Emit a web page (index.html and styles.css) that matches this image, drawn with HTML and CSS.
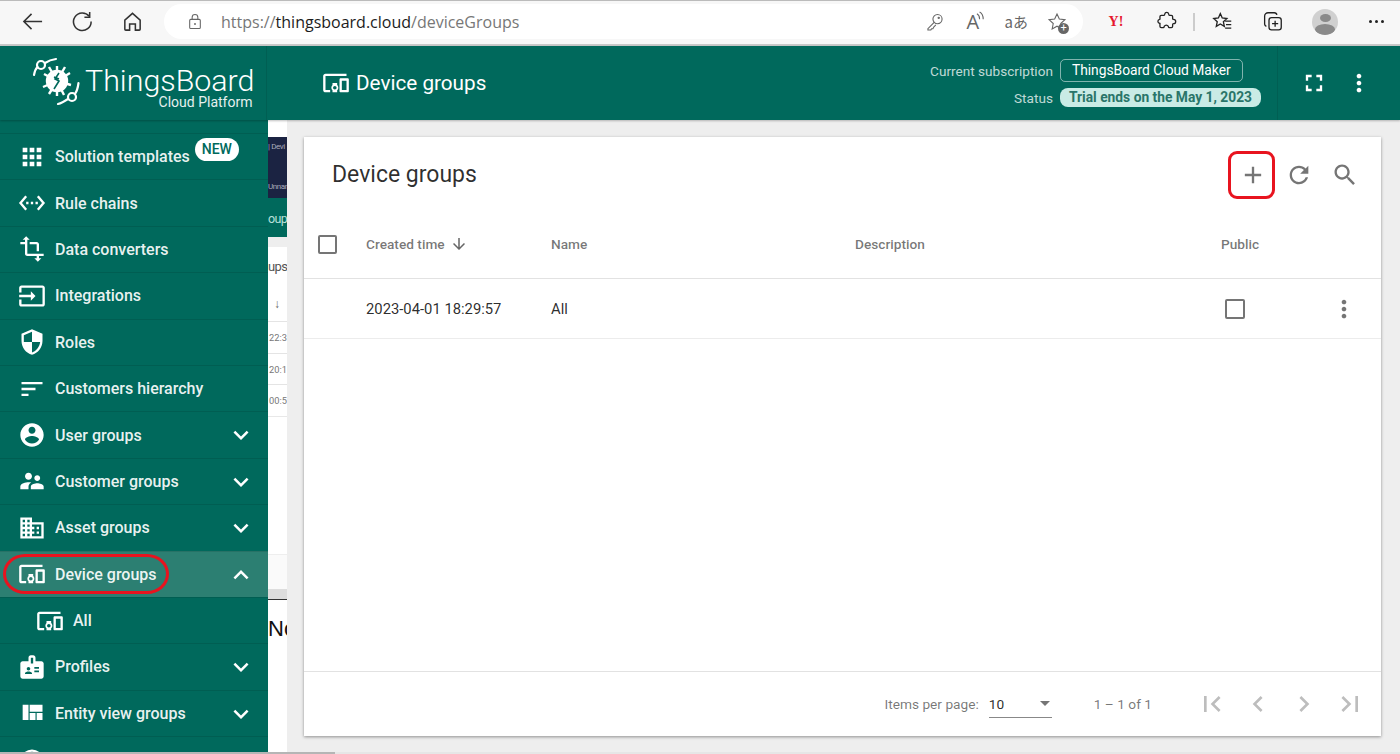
FILE: index.html
```html
<!DOCTYPE html>
<html lang="en">
<head>
    <meta charset="UTF-8">
    <meta name="viewport" content="width=device-width, initial-scale=1.0">
    <title>Device groups</title>
    <link rel="stylesheet" href="styles.css">
</head>
<body>
    <svg class="defs" width="0" height="0">
        <symbol id="i-devices" viewBox="0 0 24 24"><path d="M3 6h18V4H3c-1.1 0-2 .9-2 2v12c0 1.1.9 2 2 2h4v-2H3V6zm10 6H9v1.78c-.61.55-1 1.33-1 2.22s.39 1.67 1 2.22V20h4v-1.78c.61-.55 1-1.34 1-2.22s-.39-1.67-1-2.22V12zm-2 5.5c-.83 0-1.5-.67-1.5-1.5s.67-1.5 1.5-1.5 1.5.67 1.5 1.5-.67 1.5-1.5 1.5zM22 8h-6c-.5 0-1 .5-1 1v10c0 .5.5 1 1 1h6c.5 0 1-.5 1-1V9c0-.5-.5-1-1-1zm-1 10h-4v-8h4v8z"/></symbol>
        <symbol id="i-more" viewBox="0 0 24 24"><path d="M16.59 8.59L12 13.17 7.41 8.59 6 10l6 6 6-6z"/></symbol>
        <symbol id="i-less" viewBox="0 0 24 24"><path d="M12 8l-6 6 1.41 1.41L12 10.83l4.59 4.58L18 14z"/></symbol>
        <symbol id="i-vert" viewBox="0 0 24 24"><path d="M12 8c1.1 0 2-.9 2-2s-.9-2-2-2-2 .9-2 2 .9 2 2 2zm0 2c-1.1 0-2 .9-2 2s.9 2 2 2 2-.9 2-2-.9-2-2-2zm0 6c-1.1 0-2 .9-2 2s.9 2 2 2 2-.9 2-2-.9-2-2-2z"/></symbol>
    </svg>

    <div class="browser">
        <span class="slot"><svg class="b-icon" viewBox="0 0 24 24"><path d="M3 12h19M11 4l-8 8 8 8"/></svg></span>
        <span class="slot"><svg class="b-icon" viewBox="0 0 24 24"><path d="M19 6.5A9.2 9.2 0 1 0 21 12"/><path d="M19.5 2v5.5H14"/></svg></span>
        <span class="slot"><svg class="b-icon" viewBox="0 0 24 24"><path d="M4 10.5L12 3.5l8 7V20a1 1 0 0 1-1 1h-4v-6.5H9V21H5a1 1 0 0 1-1-1z"/></svg></span>
        <div class="address">
            <svg class="lock" viewBox="0 0 24 24"><rect x="4.5" y="9" width="15" height="13" rx="1.5"/><path d="M8 9V6a4 4 0 0 1 8 0v3"/><circle cx="12" cy="15.5" r=".6"/></svg>
            <span class="url">https://<b>thingsboard.cloud</b>/deviceGroups</span>
            <div class="address-tools">
                <span class="tool"><svg class="g-icon" viewBox="0 0 24 24"><circle cx="15" cy="8.5" r="5.5"/><path d="M11 12.5L3.5 20v1.5H7l1-1.5h1.5l1-2 2.5-2.5"/><circle cx="16.5" cy="7" r=".8"/></svg></span>
                <span class="tool"><span class="read">A</span><svg class="waves" viewBox="0 0 10 12"><path d="M1 3c2 1 3 3 3 6M4 1c3 1.5 4 5 4 8"/></svg></span>
                <span class="tool translate">aあ</span>
                <span class="tool"><svg class="g-icon" viewBox="0 0 24 24"><path d="M12 2.5l2.8 6 6.7.8-5 4.5 1.3 6.5L12 17l-5.8 3.3 1.3-6.5-5-4.5 6.7-.8z"/></svg><span class="star-plus">+</span></span>
            </div>
        </div>
        <span class="slot yahoo">Y!</span>
        <span class="slot"><svg class="b-icon thin" viewBox="0 0 24 24"><path d="M10 3.5a2.3 2.3 0 0 1 4.5 0c0 1 0 1.5 1 1.5h2a1.5 1.5 0 0 1 1.5 1.5v2c0 1 .5 1 1 1a2.5 2.5 0 0 1 0 5c-.5 0-1 0-1 1v2a1.5 1.5 0 0 1-1.5 1.5h-2.5c-1 0-.5-1-1-1.5a2.5 2.5 0 0 0-4.5 0c-.5.5 0 1.5-1 1.5H6a1.5 1.5 0 0 1-1.5-1.5V15c0-1 .5-1-.5-1a2.3 2.3 0 0 1 0-4.5c1 0 .5-.5.5-1V6.5A1.5 1.5 0 0 1 6 5h3c1 0 1-.5 1-1.5z"/></svg></span>
        <span class="bar-divider"></span>
        <span class="slot"><svg class="b-icon thin" viewBox="0 0 24 24"><path d="M9.5 3l2.2 5 5.3.6-4 3.6 1.1 5.3-4.6-2.7L4.9 17.5 6 12.2 2 8.6l5.3-.6z"/><path d="M15 11.5h7M16 15.5h6M15 19.5h7"/></svg></span>
        <span class="slot"><svg class="b-icon thin" viewBox="0 0 24 24"><rect x="8" y="7.5" width="14" height="14" rx="3"/><path d="M15 11v7M11.5 14.5h7"/><path d="M5 17.5A3 3 0 0 1 3 15V6a4 4 0 0 1 4-4h7a3 3 0 0 1 3 2.5"/></svg></span>
        <span class="slot avatar-slot"><span class="avatar"><span class="avatar-head"></span><span class="avatar-body"></span></span></span>
        <span class="slot dots"><i></i><i></i><i></i></span>
    </div>

    <header class="topbar">
        <div class="brand">
            <svg class="logo" viewBox="30 56 52 52">
                <g class="logo-lines">
                    <circle cx="41" cy="65" r="4"/>
                    <path d="M45 63c3-2 7-3.5 11-4"/>
                    <path d="M37.5 67c-2 2-3 5-3.5 8"/>
                    <circle cx="72" cy="97" r="4"/>
                    <path d="M75 94c2-3 3-7 3.5-11"/>
                    <path d="M68 99c-3 2-6 4-10 5"/>
                </g>
                <g class="logo-gear">
                    <circle cx="57" cy="81" r="10"/>
                    <path d="M57 81L49 67M57 81L65 67M57 81L70 73M57 81L71 85M57 81L64 95M57 81L49 94M57 81L43 87M57 81L44 74M57 81L57 66M57 81L57 96"/>
                </g>
                <path class="logo-bolt" d="M59 73l-4 6 4 2-5 8M54 77l5 2"/>
            </svg>
            <div class="brand-text">
                <span class="brand-name">ThingsBoard</span>
                <span class="brand-sub">Cloud Platform</span>
            </div>
        </div>
        <div class="page-title">
            <svg class="title-icon"><use href="#i-devices"/></svg>
            <span>Device groups</span>
        </div>
        <div class="subscription">
            <span class="sub-label">Current subscription</span>
            <span class="plan">ThingsBoard Cloud Maker</span>
            <span class="sub-label">Status</span>
            <span class="trial">Trial ends on the May 1, 2023</span>
        </div>
        <div class="top-actions">
            <span class="top-btn"><svg viewBox="0 0 24 24"><path d="M7 14H5v5h5v-2H7v-3zm-2-4h2V7h3V5H5v5zm12 7h-3v2h5v-5h-2v3zM14 5v2h3v3h2V5h-5z"/></svg></span>
            <span class="top-btn"><svg><use href="#i-vert"/></svg></span>
        </div>
    </header>

    <div class="content">
        <nav class="sidebar">
            <a class="nav-item">
                <svg class="nav-icon" viewBox="0 0 24 24"><path d="M4 8h4V4H4v4zm6 12h4v-4h-4v4zm-6 0h4v-4H4v4zm0-6h4v-4H4v4zm6 0h4v-4h-4v4zm6-10v4h4V4h-4zm-6 4h4V4h-4v4zm6 6h4v-4h-4v4zm0 6h4v-4h-4v4z"/></svg>
                <span>Solution templates</span>
                <span class="new-badge">NEW</span>
            </a>
            <a class="nav-item">
                <svg class="nav-icon" viewBox="0 0 24 24"><path d="M7.77 6.76L6.23 5.48.82 12l5.41 6.52 1.54-1.28L3.42 12l4.35-5.24zM7 13h2v-2H7v2zm10-2h-2v2h2v-2zm-6 2h2v-2h-2v2zm6.77-7.52l-1.54 1.28L20.58 12l-4.35 5.24 1.54 1.28L23.18 12l-5.41-6.52z"/></svg>
                <span>Rule chains</span>
            </a>
            <a class="nav-item">
                <svg class="nav-icon" viewBox="0 0 24 24"><path d="M22 18v-2H8V4h2L7 1 4 4h2v2H2v2h4v8c0 1.1.9 2 2 2h8v2h-2l3 3 3-3h-2v-2h4zM10 8h6v6h2V8c0-1.1-.9-2-2-2h-6v2z"/></svg>
                <span>Data converters</span>
            </a>
            <a class="nav-item">
                <svg class="nav-icon" viewBox="0 0 24 24"><path d="M21 3.01H3c-1.1 0-2 .9-2 2V9h2V4.99h18v14.03H3V15H1v4.01c0 1.1.9 1.98 2 1.98h18c1.1 0 2-.88 2-1.98v-14c0-1.11-.9-2-2-2zM11 16l4-4-4-4v3H1v2h10v3z"/></svg>
                <span>Integrations</span>
            </a>
            <a class="nav-item">
                <svg class="nav-icon" viewBox="0 0 24 24"><path d="M12 1L3 5v6c0 5.55 3.84 10.74 9 12 5.16-1.26 9-6.45 9-12V5l-9-4zm0 10.99h7c-.53 4.12-3.28 7.79-7 8.94V12H5V6.3l7-3.11v8.8z"/></svg>
                <span>Roles</span>
            </a>
            <a class="nav-item">
                <svg class="nav-icon" viewBox="0 0 24 24"><path d="M3 18h6v-2H3v2zM3 6v2h18V6H3zm0 7h12v-2H3v2z"/></svg>
                <span>Customers hierarchy</span>
            </a>
            <a class="nav-item">
                <svg class="nav-icon" viewBox="0 0 24 24"><path d="M12 2C6.48 2 2 6.48 2 12s4.48 10 10 10 10-4.48 10-10S17.52 2 12 2zm0 3c1.66 0 3 1.34 3 3s-1.34 3-3 3-3-1.34-3-3 1.34-3 3-3zm0 14.2c-2.5 0-4.71-1.28-6-3.22.03-1.99 4-3.08 6-3.08 1.99 0 5.97 1.09 6 3.08-1.29 1.94-3.5 3.22-6 3.22z"/></svg>
                <span>User groups</span>
                <svg class="chevron"><use href="#i-more"/></svg>
            </a>
            <a class="nav-item">
                <svg class="nav-icon" viewBox="0 0 24 24"><path d="M16.5 12c1.38 0 2.49-1.12 2.49-2.5S17.88 7 16.5 7C15.12 7 14 8.12 14 9.5s1.12 2.5 2.5 2.5zM9 11c1.66 0 2.99-1.34 2.99-3S10.66 5 9 5C7.34 5 6 6.34 6 8s1.34 3 3 3zm7.5 3c-1.83 0-5.5.92-5.5 2.75V19h11v-2.25c0-1.83-3.67-2.75-5.5-2.75zM9 13c-2.33 0-7 1.17-7 3.5V19h7v-2.25c0-.85.33-2.34 2.37-3.47C10.5 13.1 9.66 13 9 13z"/></svg>
                <span>Customer groups</span>
                <svg class="chevron"><use href="#i-more"/></svg>
            </a>
            <a class="nav-item">
                <svg class="nav-icon" viewBox="0 0 24 24"><path d="M12 7V3H2v18h20V7H12zM6 19H4v-2h2v2zm0-4H4v-2h2v2zm0-4H4V9h2v2zm0-4H4V5h2v2zm4 12H8v-2h2v2zm0-4H8v-2h2v2zm0-4H8V9h2v2zm0-4H8V5h2v2zm10 12h-8v-2h2v-2h-2v-2h2v-2h-2V9h8v10zm-2-8h-2v2h2v-2zm0 4h-2v2h2v-2z"/></svg>
                <span>Asset groups</span>
                <svg class="chevron"><use href="#i-more"/></svg>
            </a>
            <a class="nav-item active">
                <svg class="nav-icon"><use href="#i-devices"/></svg>
                <span>Device groups</span>
                <svg class="chevron"><use href="#i-less"/></svg>
                <span class="ring ring-nav"></span>
            </a>
            <a class="nav-item sub">
                <svg class="nav-icon"><use href="#i-devices"/></svg>
                <span>All</span>
            </a>
            <a class="nav-item">
                <svg class="nav-icon" viewBox="0 0 24 24"><path d="M20 7h-5V4c0-1.1-.9-2-2-2h-2c-1.1 0-2 .9-2 2v3H4c-1.1 0-2 .9-2 2v11c0 1.1.9 2 2 2h16c1.1 0 2-.9 2-2V9c0-1.1-.9-2-2-2zM9 12c.83 0 1.5.67 1.5 1.5S9.83 15 9 15s-1.5-.67-1.5-1.5S8.17 12 9 12zm3 6H6v-.75c0-1 2-1.5 3-1.5s3 .5 3 1.5V18zm1-9h-2V4h2v5zm5 7.5h-4V15h4v1.5zm0-3h-4V12h4v1.5z"/></svg>
                <span>Profiles</span>
                <svg class="chevron"><use href="#i-more"/></svg>
            </a>
            <a class="nav-item">
                <svg class="nav-icon" viewBox="0 0 24 24"><path d="M10 18h5v-6h-5v6zm-6 0h5V5H4v13zm12 0h5v-6h-5v6zM10 5v6h11V5H10z"/></svg>
                <span>Entity view groups</span>
                <svg class="chevron"><use href="#i-more"/></svg>
            </a>
            <a class="nav-item">
                <svg class="nav-icon" viewBox="0 0 24 24"><path d="M12 3a10 10 0 0 0-10 10h2a8 8 0 0 1 16 0h2A10 10 0 0 0 12 3z"/></svg>
            </a>
        </nav>

        <div class="behind">
            <div class="behind-gap"></div>
            <div class="behind-dark">
                <span>| Devi</span>
                <span>Unnam</span>
            </div>
            <div class="behind-teal">oup</div>
            <div class="behind-grey"></div>
            <div class="behind-head">
                <span class="behind-ups">ups</span>
                <span class="behind-arrow">&#8595;</span>
            </div>
            <div class="behind-row">22:3</div>
            <div class="behind-row">20:1</div>
            <div class="behind-row">00:5</div>
            <div class="behind-fill"></div>
            <div class="behind-pale"></div>
            <div class="behind-bar"></div>
            <div class="behind-no">No</div>
        </div>

        <main class="main">
            <section class="card">
                <div class="card-head">
                    <h2>Device groups</h2>
                    <div class="card-tools">
                        <span class="tool-btn">
                            <svg viewBox="0 0 24 24"><path d="M19 13h-6v6h-2v-6H5v-2h6V5h2v6h6v2z"/></svg>
                            <span class="ring ring-add"></span>
                        </span>
                        <span class="tool-btn"><svg viewBox="0 0 24 24"><path d="M17.65 6.35C16.2 4.9 14.21 4 12 4c-4.42 0-7.99 3.58-7.99 8s3.57 8 7.99 8c3.73 0 6.84-2.55 7.73-6h-2.08c-.82 2.33-3.04 4-5.65 4-3.31 0-6-2.69-6-6s2.69-6 6-6c1.66 0 3.14.69 4.22 1.78L13 11h7V4l-2.35 2.35z"/></svg></span>
                        <span class="tool-btn"><svg viewBox="0 0 24 24"><path d="M15.5 14h-.79l-.28-.27C15.41 12.59 16 11.11 16 9.5 16 5.91 13.09 3 9.5 3S3 5.91 3 9.5 5.91 16 9.5 16c1.61 0 3.09-.59 4.23-1.57l.27.28v.79l5 4.99L20.49 19l-4.99-5zm-6 0C7.01 14 5 11.99 5 9.5S7.01 5 9.5 5 14 7.01 14 9.5 11.99 14 9.5 14z"/></svg></span>
                    </div>
                </div>
                <table class="groups">
                    <thead>
                        <tr>
                            <th class="col-check"><span class="checkbox"></span></th>
                            <th class="col-time">Created time <svg class="sort" viewBox="0 0 24 24"><path d="M20 12l-1.41-1.41L13 16.17V4h-2v12.17l-5.58-5.59L4 12l8 8 8-8z"/></svg></th>
                            <th class="col-name">Name</th>
                            <th class="col-desc">Description</th>
                            <th class="col-public">Public</th>
                            <th></th>
                        </tr>
                    </thead>
                    <tbody>
                        <tr>
                            <td></td>
                            <td>2023-04-01 18:29:57</td>
                            <td>All</td>
                            <td></td>
                            <td><span class="checkbox row-check"></span></td>
                            <td class="row-more"><svg><use href="#i-vert"/></svg></td>
                        </tr>
                    </tbody>
                </table>
                <div class="pager">
                    <span class="pager-label">Items per page:</span>
                    <span class="page-size"><span>10</span><i class="caret"></i></span>
                    <span class="pager-range">1 – 1 of 1</span>
                    <span class="pager-btn"><svg viewBox="0 0 24 24"><path d="M18.41 16.59L13.82 12l4.59-4.59L17 6l-6 6 6 6zM6 6h2v12H6z"/></svg></span>
                    <span class="pager-btn"><svg viewBox="0 0 24 24"><path d="M15.41 7.41L14 6l-6 6 6 6 1.41-1.41L10.83 12z"/></svg></span>
                    <span class="pager-btn"><svg viewBox="0 0 24 24"><path d="M10 6L8.59 7.41 13.17 12l-4.58 4.59L10 18l6-6z"/></svg></span>
                    <span class="pager-btn"><svg viewBox="0 0 24 24"><path d="M5.59 7.41L10.18 12l-4.59 4.59L7 18l6-6-6-6zM16 6h2v12h-2z"/></svg></span>
                </div>
            </section>
        </main>
    </div>
    <div class="bottom-edge"></div>
</body>
</html>
```

FILE: styles.css
```css
html, body {
    height: 100%;
}
body {
    margin: 0;
    height: 754px;
    overflow: hidden;
    display: flex;
    flex-direction: column;
    font-family: Roboto, "Liberation Sans", sans-serif;
    background: #eee;
}
.defs {
    position: absolute;
}

/* browser chrome */
.browser {
    height: 46px;
    box-sizing: border-box;
    flex: none;
    display: flex;
    align-items: center;
    padding: 1px 0 3px 7px;
    background: #f7f7f7;
    border-top: 1px solid #bbb;
    border-bottom: 2px solid #c9c9c9;
}
.slot {
    width: 50px;
    flex: none;
    display: flex;
    justify-content: center;
    align-items: center;
}
.b-icon {
    width: 23px;
    height: 23px;
    fill: none;
    stroke: #333;
    stroke-width: 1.6;
}
.b-icon.thin {
    width: 21px;
    height: 21px;
    stroke: #222;
    stroke-width: 1.5;
}
.address {
    width: 919px;
    height: 35px;
    margin: 0 8px 0 7px;
    flex: none;
    display: flex;
    align-items: center;
    box-sizing: border-box;
    padding: 0 6px 0 18px;
    background: #fff;
    border-radius: 18px;
}
.lock {
    width: 26px;
    height: 17px;
    fill: none;
    stroke: #666;
    stroke-width: 1.5;
}
.url {
    margin-left: 13px;
    font-family: "Open Sans", "Noto Sans", sans-serif;
    font-size: 16px;
    color: #777;
}
.url b {
    font-weight: 400;
    color: #1c1c1c;
}
.address-tools {
    margin-left: auto;
    display: flex;
}
.tool {
    width: 40.5px;
    height: 24px;
    position: relative;
    display: flex;
    justify-content: center;
    align-items: center;
    color: #666;
}
.g-icon {
    width: 20px;
    height: 20px;
    fill: none;
    stroke: #666;
    stroke-width: 1.3;
}
.read {
    font-family: "Open Sans", sans-serif;
    font-size: 20px;
}
.waves {
    width: 9px;
    height: 11px;
    margin: -10px 0 0 -3px;
    fill: none;
    stroke: #666;
    stroke-width: 1.2;
}
.translate {
    font-family: "Noto Sans CJK JP", sans-serif;
    font-size: 15px;
}
.star-plus {
    position: absolute;
    right: 8px;
    bottom: 0;
    width: 11px;
    height: 11px;
    border-radius: 50%;
    background: #666;
    color: #fff;
    font-size: 11px;
    line-height: 10px;
    text-align: center;
}
.yahoo {
    font-family: "Liberation Serif", serif;
    font-weight: 700;
    font-size: 14px;
    color: #e6172f;
}
.bar-divider {
    width: 2px;
    height: 18px;
    margin: 0 2px;
    flex: none;
    background: #ccc;
}
.avatar-slot {
    margin-left: 3px;
}
.avatar {
    width: 26px;
    height: 26px;
    border-radius: 50%;
    overflow: hidden;
    display: flex;
    flex-direction: column;
    align-items: center;
    background: #d0d0d0;
}
.avatar-head {
    width: 11px;
    height: 11px;
    margin-top: 5px;
    border-radius: 50%;
    background: #8a8a8a;
}
.avatar-body {
    width: 20px;
    height: 14px;
    margin-top: 2px;
    border-radius: 50%;
    background: #8a8a8a;
}
.dots {
    width: 48px;
    margin-left: 2px;
    gap: 3px;
}
.dots i {
    width: 3px;
    height: 3px;
    border-radius: 50%;
    background: #222;
}

/* teal header */
.topbar {
    height: 74px;
    flex: none;
    display: flex;
    align-items: stretch;
    background: #00695c;
    color: #fff;
    box-shadow: 0 1px 2px rgba(0, 0, 0, .25);
    position: relative;
    z-index: 2;
}
.brand {
    width: 267px;
    flex: none;
    display: flex;
    align-items: flex-start;
    padding-left: 30px;
    box-sizing: border-box;
    border-right: 1px solid #005f53;
}
.logo {
    width: 52px;
    height: 52px;
    margin-top: 10px;
    flex: none;
}
.logo-lines {
    fill: none;
    stroke: #fff;
    stroke-width: 2.2;
    stroke-linecap: round;
}
.logo-gear {
    fill: #fff;
    stroke: #fff;
    stroke-width: 2.4;
}
.logo-bolt {
    fill: none;
    stroke: #00695c;
    stroke-width: 1.6;
}
.brand-text {
    margin-left: 3px;
    margin-top: 21px;
    display: flex;
    flex-direction: column;
    align-items: flex-end;
}
.brand-name {
    font-size: 30.4px;
    font-weight: 300;
    line-height: 28px;
}
.brand-sub {
    padding-right: 2px;
    font-size: 14px;
    line-height: 14px;
    opacity: .9;
}
.page-title {
    margin-left: 55px;
    display: flex;
    align-items: center;
    font-size: 20.7px;
}
.title-icon {
    width: 28px;
    height: 28px;
    fill: #fff;
    margin-right: 6px;
}
.subscription {
    margin-left: auto;
    margin-right: 16px;
    padding-top: 13px;
    display: grid;
    grid-template-columns: auto auto;
    grid-template-rows: 23px 19px;
    column-gap: 7px;
    row-gap: 6px;
    justify-items: start;
    align-items: center;
}
.sub-label {
    justify-self: end;
    font-size: 13.6px;
    color: rgba(255, 255, 255, .76);
}
.plan {
    height: 23px;
    line-height: 21px;
    padding: 0 11px;
    box-sizing: border-box;
    border: 1px solid rgba(255, 255, 255, .5);
    border-radius: 5px;
    font-size: 13.8px;
}
.trial {
    height: 19px;
    line-height: 19px;
    padding: 0 9px;
    border-radius: 8px;
    background: #c9ebe5;
    color: #2a7569;
    font-size: 13.8px;
    font-weight: 700;
}
.top-actions {
    width: 123px;
    flex: none;
    box-sizing: border-box;
    padding-left: 13px;
    display: flex;
    align-items: center;
    border-left: 1px solid #005f53;
}
.top-btn {
    width: 45px;
    display: flex;
    justify-content: center;
}
.top-btn svg {
    width: 28px;
    height: 28px;
    fill: #fff;
}

.content {
    flex: 1;
    min-height: 0;
    display: flex;
}

/* side menu */
.sidebar {
    width: 268px;
    flex: none;
    box-sizing: border-box;
    padding-top: 13px;
    background: #00695c;
    overflow: hidden;
}
.nav-item {
    position: relative;
    height: 46.4px;
    box-sizing: border-box;
    display: flex;
    align-items: center;
    padding-left: 18px;
    border-top: 1px solid rgba(0, 0, 0, .1);
    font-size: 16px;
    font-weight: 500;
    color: rgba(255, 255, 255, .93);
}
.nav-item.active {
    background: #2c7f72;
}
.nav-item.sub {
    padding-left: 36px;
}
.nav-icon {
    width: 28px;
    height: 28px;
    margin-right: 9px;
    flex: none;
    fill: #fff;
}
.chevron {
    position: absolute;
    right: 12px;
    top: 8px;
    width: 30px;
    height: 30px;
    fill: #fff;
}
.new-badge {
    align-self: flex-start;
    margin: 4px 0 0 5px;
    padding: 0 7px;
    height: 23px;
    line-height: 23px;
    border-radius: 12px;
    background: #fff;
    color: #00695c;
    font-size: 14px;
    font-weight: 500;
}
.ring {
    position: absolute;
    box-sizing: border-box;
    border: 3px solid #e8141f;
    pointer-events: none;
}
.ring-nav {
    left: 3px;
    top: 2px;
    width: 166px;
    height: 40px;
    border-radius: 22px / 20px;
}
.ring-add {
    left: -2px;
    top: 0;
    width: 47px;
    height: 48px;
    border-radius: 9px;
}

/* part of another page showing through */
.behind {
    width: 19px;
    flex: none;
    display: flex;
    flex-direction: column;
    overflow: hidden;
    background: #fff;
    white-space: nowrap;
    font-size: 11px;
    color: #777;
}
.behind-gap {
    height: 17px;
    flex: none;
}
.behind-dark {
    height: 61px;
    flex: none;
    box-sizing: border-box;
    padding-top: 5px;
    display: flex;
    flex-direction: column;
    gap: 31px;
    background: #1b2342;
    color: #aab;
    font-size: 8px;
    letter-spacing: -.4px;
}
.behind-teal {
    height: 39px;
    flex: none;
    line-height: 42px;
    background: #00695c;
    color: #b9e0da;
    font-size: 12.5px;
    letter-spacing: -.6px;
}
.behind-grey {
    height: 10px;
    flex: none;
    background: #eee;
}
.behind-head {
    height: 74px;
    flex: none;
    display: flex;
    flex-direction: column;
    color: #555;
}
.behind-ups {
    margin-top: 12px;
    font-size: 13px;
    letter-spacing: -.6px;
}
.behind-arrow {
    margin: 23px 0 0 6px;
    font-size: 12px;
    color: #666;
}
.behind-row {
    height: 31.5px;
    flex: none;
    box-sizing: border-box;
    line-height: 31px;
    padding-left: 1px;
    border-top: 1px solid #e4e4e4;
    font-size: 9.3px;
}
.behind-fill {
    height: 137px;
    flex: none;
    border-top: 1px solid #e8e8e8;
    border-bottom: 1px solid #eee;
}
.behind-pale {
    height: 34px;
    flex: none;
    background: #fafafa;
}
.behind-bar {
    height: 10px;
    flex: none;
    background: #ddd;
    border-bottom: 1px solid #333;
}
.behind-no {
    margin-top: 16px;
    font-family: "Liberation Sans", sans-serif;
    font-size: 22px;
    color: #111;
}

/* main card */
.main {
    flex: 1;
    min-width: 0;
    box-sizing: border-box;
    padding: 17px 19px 16px 17px;
    display: flex;
    background: #eee;
}
.card {
    flex: 1;
    min-width: 0;
    display: flex;
    flex-direction: column;
    background: #fff;
    box-shadow: 0 1px 3px rgba(0, 0, 0, .4);
}
.card-head {
    height: 75px;
    flex: none;
    display: flex;
    align-items: center;
    padding: 0 13px 0 28px;
}
.card-head h2 {
    margin: 0;
    font-size: 23px;
    font-weight: 400;
    color: rgba(0, 0, 0, .82);
}
.card-tools {
    margin-left: auto;
    display: flex;
    padding-top: 1px;
}
.tool-btn {
    position: relative;
    width: 46px;
    height: 48px;
    display: flex;
    justify-content: center;
    align-items: center;
}
.tool-btn svg {
    width: 28px;
    height: 28px;
    fill: #757575;
}
.groups {
    width: 100%;
    table-layout: fixed;
    border-collapse: collapse;
}
.groups th {
    height: 66px;
    padding: 0 0 1px;
    box-sizing: border-box;
    text-align: left;
    font-size: 13.7px;
    font-weight: 500;
    color: rgba(0, 0, 0, .54);
    border-bottom: 1px solid #e2e2e2;
}
.groups td {
    height: 60px;
    padding: 1px 0 0;
    box-sizing: border-box;
    font-size: 14.8px;
    color: rgba(0, 0, 0, .84);
    border-bottom: 1px solid #ececec;
}
.col-check {
    width: 62px;
}
.col-check .checkbox {
    margin-left: 14px;
}
.col-time {
    width: 185px;
}
.col-name {
    width: 304px;
}
.col-desc {
    width: 366px;
}
.col-public {
    width: 104px;
}
.sort {
    width: 18px;
    height: 18px;
    margin-left: 2px;
    fill: #666;
    vertical-align: -4px;
}
.checkbox {
    display: block;
    width: 19px;
    height: 19px;
    box-sizing: border-box;
    border: 2px solid #757575;
    border-radius: 2px;
}
.groups .row-check {
    width: 20px;
    height: 20px;
    margin-left: 4px;
}
.row-more svg {
    display: block;
    width: 28px;
    height: 28px;
    margin-left: 5px;
    fill: #757575;
}
.pager {
    margin-top: auto;
    height: 65px;
    flex: none;
    box-sizing: border-box;
    padding-right: 8px;
    display: flex;
    justify-content: flex-end;
    align-items: center;
    border-top: 1px solid #e2e2e2;
    font-size: 13.7px;
    color: rgba(0, 0, 0, .54);
}
.page-size {
    position: relative;
    width: 63px;
    height: 28px;
    margin-left: 10px;
    box-sizing: border-box;
    display: flex;
    align-items: center;
    color: rgba(0, 0, 0, .84);
    border-bottom: 1px solid #888;
}
.caret {
    position: absolute;
    right: 2px;
    top: 11px;
    border-left: 5.5px solid transparent;
    border-right: 5.5px solid transparent;
    border-top: 5.5px solid #757575;
}
.pager-range {
    margin: 0 37px 0 42px;
}
.pager-btn {
    width: 46px;
    display: flex;
    justify-content: center;
}
.pager-btn svg {
    width: 32px;
    height: 32px;
    fill: #bdbdbd;
}
.bottom-edge {
    height: 2px;
    flex: none;
    background: linear-gradient(to right, #b5b5b5 335px, #e6e6e6 335px);
    position: relative;
    z-index: 2;
}
```
